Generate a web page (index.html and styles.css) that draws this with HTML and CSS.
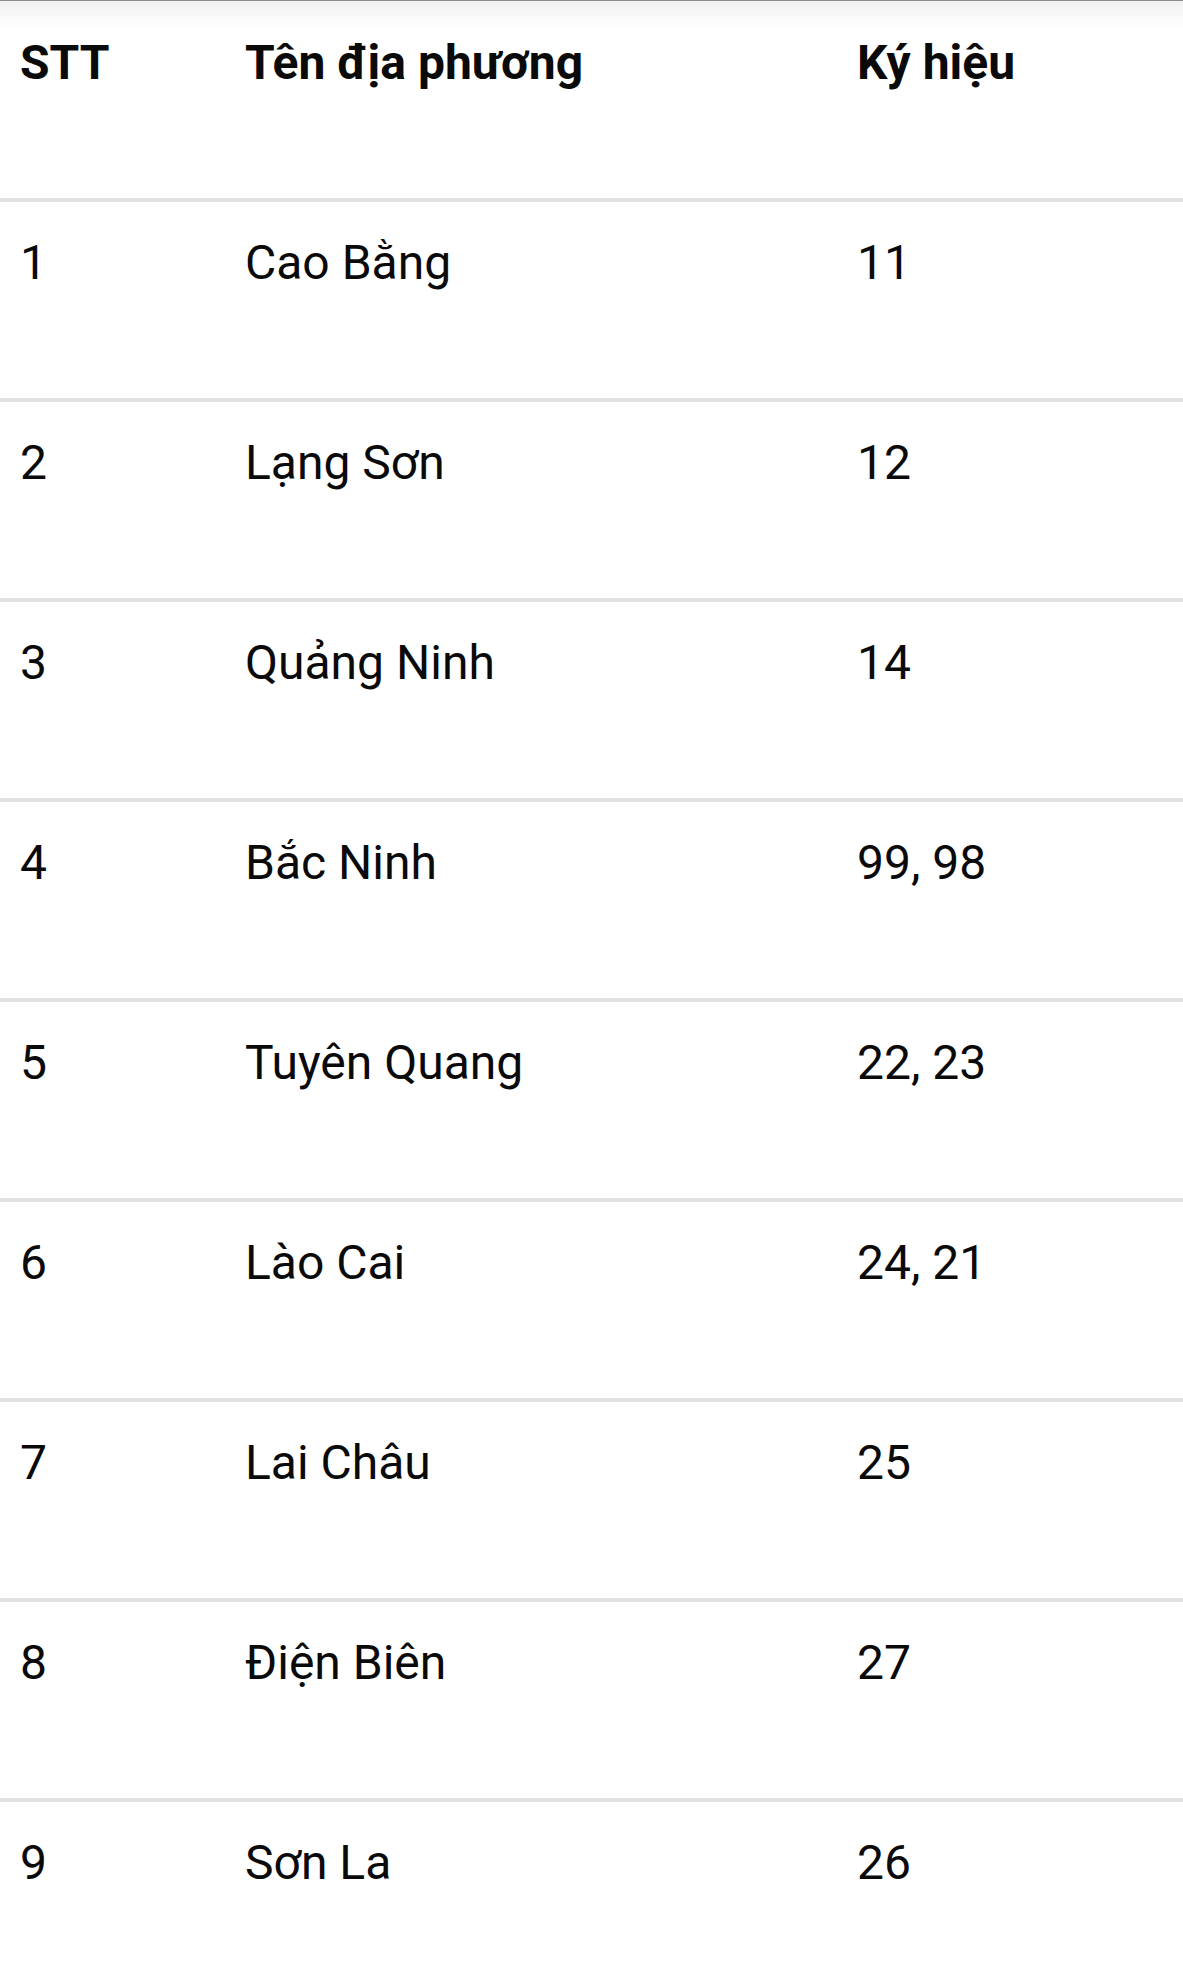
FILE: index.html
```html
<!DOCTYPE html>
<html lang="vi">
<head>
<meta charset="utf-8">
<title>Ký hiệu địa phương</title>
<link rel="stylesheet" href="styles.css">
</head>
<body>
<div class="table">
  <div class="row head">
    <div class="cell">STT</div>
    <div class="cell">Tên địa phương</div>
    <div class="cell">Ký hiệu</div>
  </div>
  <div class="row">
    <div class="cell">1</div>
    <div class="cell">Cao Bằng</div>
    <div class="cell">11</div>
  </div>
  <div class="row">
    <div class="cell">2</div>
    <div class="cell">Lạng Sơn</div>
    <div class="cell">12</div>
  </div>
  <div class="row">
    <div class="cell">3</div>
    <div class="cell">Quảng Ninh</div>
    <div class="cell">14</div>
  </div>
  <div class="row">
    <div class="cell">4</div>
    <div class="cell">Bắc Ninh</div>
    <div class="cell">99, 98</div>
  </div>
  <div class="row">
    <div class="cell">5</div>
    <div class="cell">Tuyên Quang</div>
    <div class="cell">22, 23</div>
  </div>
  <div class="row">
    <div class="cell">6</div>
    <div class="cell">Lào Cai</div>
    <div class="cell">24, 21</div>
  </div>
  <div class="row">
    <div class="cell">7</div>
    <div class="cell">Lai Châu</div>
    <div class="cell">25</div>
  </div>
  <div class="row">
    <div class="cell">8</div>
    <div class="cell">Điện Biên</div>
    <div class="cell">27</div>
  </div>
  <div class="row">
    <div class="cell">9</div>
    <div class="cell">Sơn La</div>
    <div class="cell">26</div>
  </div>
</div>
</body>
</html>
```

FILE: styles.css
```css
html, body {
  margin: 0;
  padding: 0;
  background: #fff;
}
body {
  font-family: Roboto, "Noto Sans", "Liberation Sans", sans-serif;
  color: #0a0a0a;
  overflow: hidden;
}
.table {
  display: flex;
  flex-direction: column;
}
.row {
  display: grid;
  grid-template-columns: 225px 612px 1fr;
  height: 196px;
  border-bottom: 4px solid #e1e1e1;
  box-sizing: content-box;
}
.row.head {
  height: 197px;
  border-top: 1px solid #8c8c8c;
  background: linear-gradient(to bottom, #f1f1f1 0px, #fbfbfb 18px, #ffffff 28px);
}
.cell {
  padding: 33px 0 0 20px;
  font-size: 48px;
  line-height: 56px;
  font-weight: 400;
  white-space: nowrap;
}
.head .cell {
  padding-top: 34px;
  font-weight: 700;
}
```
